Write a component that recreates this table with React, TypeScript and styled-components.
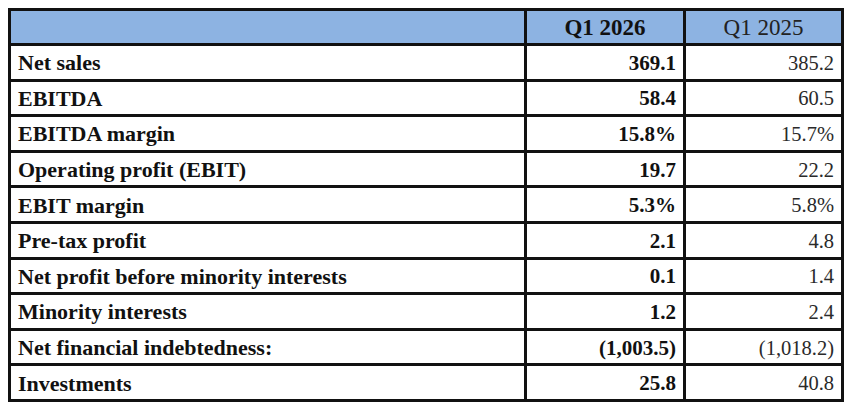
import React from "react";
import styled, { createGlobalStyle } from "styled-components";

const GlobalStyle = createGlobalStyle`
  html, body {
    margin: 0;
    padding: 0;
    background: #fff;
  }
  body {
    font-family: "Liberation Serif", "Times New Roman", serif;
    color: #111;
  }
`;

const Page = styled.div`
  padding: 8px 0 0 8px;
`;

const Table = styled.table`
  border-collapse: collapse;
  table-layout: fixed;
  border: 3px solid #111;
`;

const HeadRow = styled.tr`
  height: 35px;
  background: #8db3e2;
`;

const Row = styled.tr`
  height: 35.6px;
`;

const HeadCell = styled.th<{ $bold?: boolean }>`
  border: 3px solid #111;
  padding: 1px 6px 0;
  font-size: 23px;
  font-weight: ${({ $bold }) => ($bold ? 700 : 400)};
  color: ${({ $bold }) => ($bold ? "#111" : "#222")};
  text-align: center;
  vertical-align: middle;
`;

const Label = styled.td`
  border: 3px solid #111;
  padding: 2px 7px 0;
  font-size: 22px;
  font-weight: 700;
  white-space: nowrap;
`;

const Value = styled.td<{ $bold?: boolean }>`
  border: 3px solid #111;
  padding: 2px 7px 0;
  font-size: ${({ $bold }) => ($bold ? "21px" : "20.5px")};
  font-weight: ${({ $bold }) => ($bold ? 700 : 400)};
  color: ${({ $bold }) => ($bold ? "#111" : "#2a2a2a")};
  text-align: right;
  white-space: nowrap;
`;

const rows: [string, string, string][] = [
  ["Net sales", "369.1", "385.2"],
  ["EBITDA", "58.4", "60.5"],
  ["EBITDA margin", "15.8%", "15.7%"],
  ["Operating profit (EBIT)", "19.7", "22.2"],
  ["EBIT margin", "5.3%", "5.8%"],
  ["Pre-tax profit", "2.1", "4.8"],
  ["Net profit before minority interests", "0.1", "1.4"],
  ["Minority interests", "1.2", "2.4"],
  ["Net financial indebtedness:", "(1,003.5)", "(1,018.2)"],
  ["Investments", "25.8", "40.8"],
];

export default function App() {
  return (
    <Page>
      <GlobalStyle />
      <Table>
        <colgroup>
          <col style={{ width: 516 }} />
          <col style={{ width: 159 }} />
          <col style={{ width: 158 }} />
        </colgroup>
        <thead>
          <HeadRow>
            <HeadCell />
            <HeadCell $bold>Q1 2026</HeadCell>
            <HeadCell>Q1 2025</HeadCell>
          </HeadRow>
        </thead>
        <tbody>
          {rows.map(([label, cur, prev]) => (
            <Row key={label}>
              <Label>{label}</Label>
              <Value $bold>{cur}</Value>
              <Value>{prev}</Value>
            </Row>
          ))}
        </tbody>
      </Table>
    </Page>
  );
}
